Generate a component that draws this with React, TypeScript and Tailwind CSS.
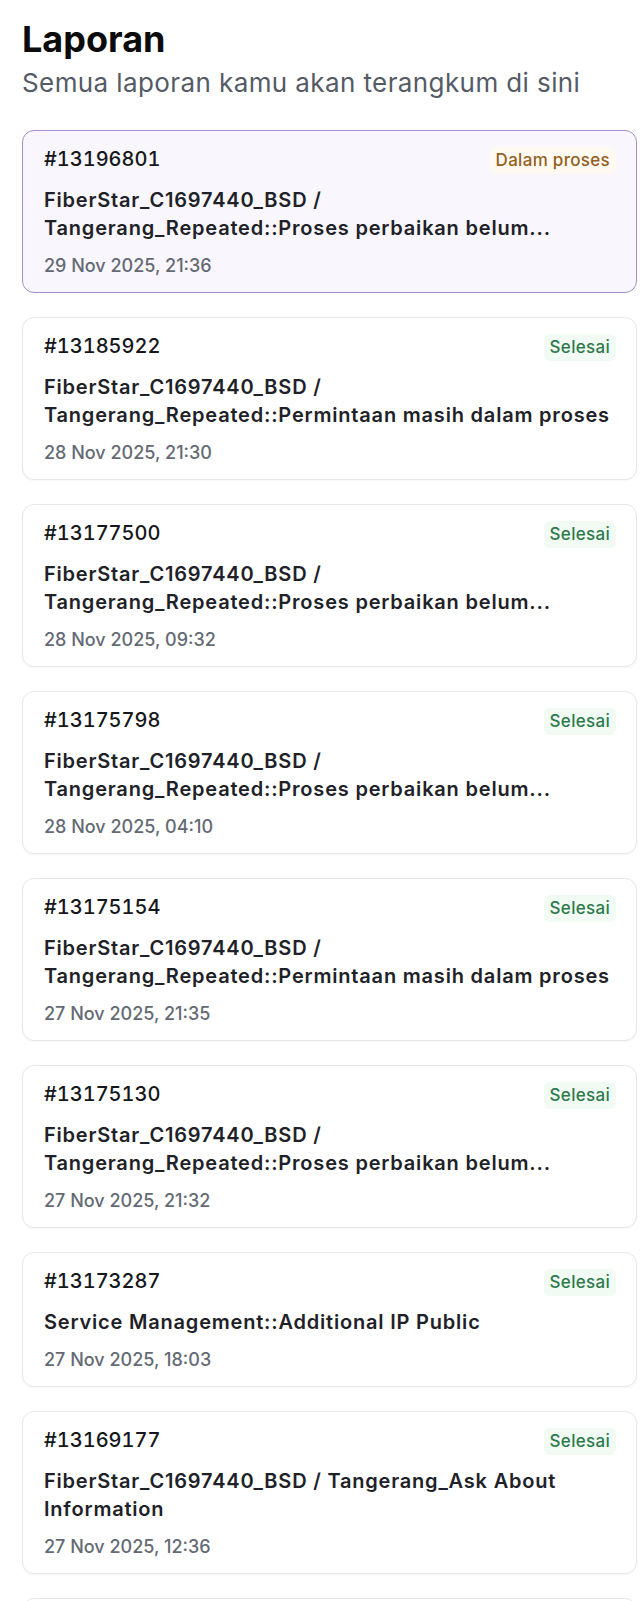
type Status = "Dalam proses" | "Selesai";

type Report = {
  id: string;
  status: Status;
  title: string;
  date: string;
};

const reports: Report[] = [
  {
    id: "#13196801",
    status: "Dalam proses",
    title: "FiberStar_C1697440_BSD / Tangerang_Repeated::Proses perbaikan belum...",
    date: "29 Nov 2025, 21:36",
  },
  {
    id: "#13185922",
    status: "Selesai",
    title: "FiberStar_C1697440_BSD / Tangerang_Repeated::Permintaan masih dalam proses",
    date: "28 Nov 2025, 21:30",
  },
  {
    id: "#13177500",
    status: "Selesai",
    title: "FiberStar_C1697440_BSD / Tangerang_Repeated::Proses perbaikan belum...",
    date: "28 Nov 2025, 09:32",
  },
  {
    id: "#13175798",
    status: "Selesai",
    title: "FiberStar_C1697440_BSD / Tangerang_Repeated::Proses perbaikan belum...",
    date: "28 Nov 2025, 04:10",
  },
  {
    id: "#13175154",
    status: "Selesai",
    title: "FiberStar_C1697440_BSD / Tangerang_Repeated::Permintaan masih dalam proses",
    date: "27 Nov 2025, 21:35",
  },
  {
    id: "#13175130",
    status: "Selesai",
    title: "FiberStar_C1697440_BSD / Tangerang_Repeated::Proses perbaikan belum...",
    date: "27 Nov 2025, 21:32",
  },
  {
    id: "#13173287",
    status: "Selesai",
    title: "Service Management::Additional IP Public",
    date: "27 Nov 2025, 18:03",
  },
  {
    id: "#13169177",
    status: "Selesai",
    title: "FiberStar_C1697440_BSD / Tangerang_Ask About Information",
    date: "27 Nov 2025, 12:36",
  },
  {
    id: "#13168402",
    status: "Selesai",
    title: "FiberStar_C1697440_BSD / Tangerang_Repeated::Proses perbaikan belum...",
    date: "26 Nov 2025, 20:14",
  },
];

function StatusBadge({ status }: { status: Status }) {
  const pending = status === "Dalam proses";
  return (
    <span
      className={
        pending
          ? "shrink-0 rounded-md bg-[#fefaf1] px-[6px] py-[3px] text-[17px] leading-[21px] font-medium tracking-[0.3px] text-[#94601f]"
          : "shrink-0 rounded-md bg-[#f1fbf4] px-[6px] py-[3px] text-[17px] leading-[21px] font-medium tracking-[0.3px] text-[#2f7a4c]"
      }
    >
      {status}
    </span>
  );
}

function ReportCard({ report, active }: { report: Report; active: boolean }) {
  return (
    <div
      className={
        active
          ? "rounded-xl border border-[#a58fc6] bg-[#f9f6fd] pl-[21px] pr-[20px] pt-[14px] pb-[14px]"
          : "rounded-xl border border-[#e6e7ea] bg-white pl-[21px] pr-[20px] pt-[14px] pb-[14px] shadow-[0_1px_2px_rgba(0,0,0,0.04)]"
      }
    >
      <div className="flex h-[28px] items-baseline justify-between gap-3">
        <span className="text-[20px] leading-[28px] font-medium tabular-nums text-[#15171a]">
          {report.id}
        </span>
        <StatusBadge status={report.status} />
      </div>
      <p className="mt-[13px] line-clamp-2 text-[20px] leading-[28px] font-semibold tracking-[0.8px] text-[#1e2228]">
        {report.title}
      </p>
      <p className="mt-[12px] text-[18px] leading-[24px] font-medium text-[#646a74]">{report.date}</p>
    </div>
  );
}

export default function App() {
  return (
    <div className="min-h-screen bg-white pt-[19px] pl-[22px] pr-[4px] font-['Inter',sans-serif]">
      <h1 className="text-[36px] leading-[40px] font-bold text-[#0b0b0c]">Laporan</h1>
      <p className="mt-[7px] text-[26px] leading-[34px] tracking-[0.4px] text-[#545b66]">
        Semua laporan kamu akan terangkum di sini
      </p>
      <div className="mt-[30px] flex flex-col gap-[24px]">
        {reports.map((r, i) => (
          <ReportCard key={r.id} report={r} active={i === 0} />
        ))}
      </div>
    </div>
  );
}
